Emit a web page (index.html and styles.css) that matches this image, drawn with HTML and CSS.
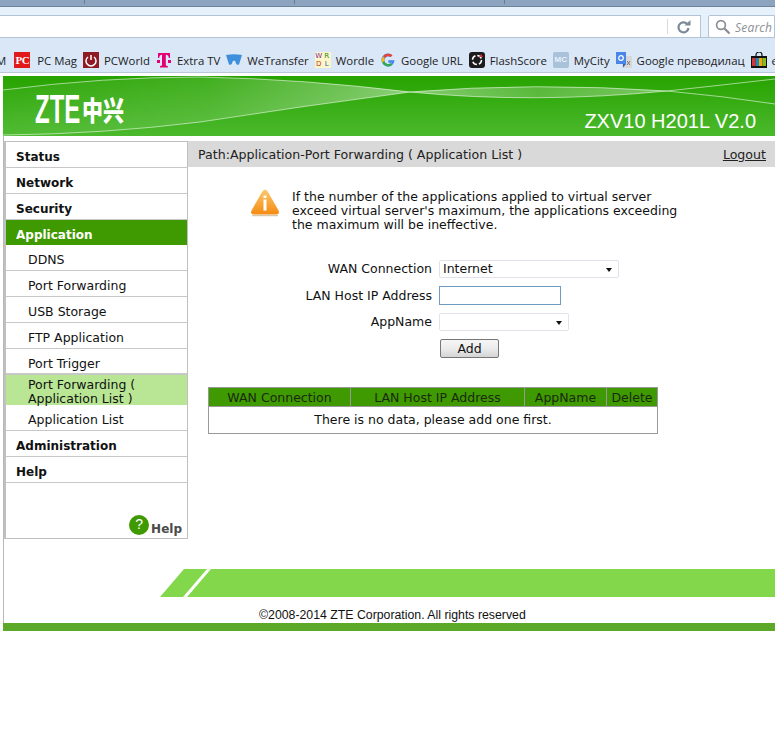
FILE: index.html
```html
<!DOCTYPE html>
<html lang="en">
<head>
<meta charset="utf-8">
<title>ZXV10 H201L V2.0</title>
<link rel="stylesheet" href="styles.css">
</head>
<body>
<div class="chrome">
  <div class="tabs">
    <span class="tab-sep s1"></span><span class="tab-sep s2"></span><span class="tab-sep s3"></span>
  </div>
  <div class="toolbar">
    <div class="urlbar">
      <span class="reload">
        <svg width="16" height="14" viewBox="0 0 16 14"><path d="M12.5 8a5 5 0 1 1-1.6-4.4" fill="none" stroke="#7d8a96" stroke-width="2.2"/><path d="M8.5 5.500h6V0z" fill="#7d8a96"/></svg>
      </span>
    </div>
    <div class="searchbar">
      <svg width="16" height="16" viewBox="0 0 16 16"><circle cx="6" cy="6" r="4.4" fill="none" stroke="#8a8f96" stroke-width="1.7"/><path d="M9.5 9.5l5 5" stroke="#8a8f96" stroke-width="2.2"/></svg>
      <span class="search-text">Search</span>
    </div>
  </div>
  <div class="bookmarks">
    <span class="bm bm-first">M</span>
    <span class="bm"><span class="fav fav-pc">PC</span>PC Mag</span>
    <span class="bm"><svg class="fav" viewBox="0 0 16 16"><rect width="16" height="16" fill="#8f1a24"/><path d="M5 5a5 5 0 1 0 6 0" fill="none" stroke="#fff" stroke-width="1.5"/><path d="M8 3v5" stroke="#fff" stroke-width="1.5"/></svg>PCWorld</span>
    <span class="bm"><svg class="fav" viewBox="0 0 16 16"><path d="M2 1h12v5h-1.200q0-3-3-3.200V13q0 1 2 1v1.500H4V14q2 0 2-1V2.800Q3.200 3 3.200 6H2z" fill="#e20074"/><rect x="1" y="8" width="3" height="3" fill="#e20074"/><rect x="12" y="8" width="3" height="3" fill="#e20074"/></svg>Extra TV</span>
    <span class="bm"><svg class="fav" viewBox="0 0 16 16"><path d="M0 3q8-1.500 16 0l-3 9.500q-2 1-3-1-.5-3-2-3-1.500 0-2 3-1 2-3 1z" fill="#3f8fdc"/></svg>WeTransfer</span>
    <span class="bm"><span class="fav fav-wr"><i class="w1">W</i><i class="w2">R</i><i class="w3">D</i><i class="w4">L</i></span>Wordle</span>
    <span class="bm"><svg class="fav" viewBox="0 0 16 16"><path d="M14.500 8.200H8.300v2.500h3.600A4 4 0 1 1 10.600 5l1.800-1.800A6.500 6.500 0 1 0 14.500 8.200z" fill="#4285f4"/><path d="M3 4.500A6.500 6.500 0 0 1 12.400 3.200L10.600 5A4 4 0 0 0 4.800 6z" fill="#ea4335"/><path d="M2.300 10.800A6.500 6.500 0 0 1 3 4.500L4.800 6a4 4 0 0 0-.500 3z" fill="#fbbc05"/><path d="M2.300 10.800L4.300 9a4 4 0 0 0 6.500 2l1.800 1.700a6.500 6.500 0 0 1-10.300-1.900z" fill="#34a853"/></svg>Google URL</span>
    <span class="bm"><svg class="fav" viewBox="0 0 16 16"><rect width="16" height="16" rx="3" fill="#1c1c1c"/><circle cx="8" cy="8" r="4.500" fill="none" stroke="#fff" stroke-width="1.500" stroke-dasharray="5 2"/><path d="M10 5l2-3 2 3z" fill="#e0303a"/></svg>FlashScore</span>
    <span class="bm"><span class="fav fav-mc">MC</span>MyCity</span>
    <span class="bm"><svg class="fav" viewBox="0 0 16 16"><rect x="6" y="4" width="10" height="12" fill="#d8d8d8"/><rect width="10" height="12" fill="#4a86e8"/><path d="M10 12l-3 3.500V12z" fill="#2f5fb5"/><circle cx="5" cy="6" r="2.300" fill="none" stroke="#fff" stroke-width="1.200"/><path d="M11 9l3 4M14 9l-3 4" stroke="#777" stroke-width="1"/></svg>Google преводилац</span>
    <span class="bm"><svg class="fav" viewBox="0 0 16 16"><path d="M5 5V3a3 3 0 0 1 6 0v2" fill="none" stroke="#111" stroke-width="1.200"/><rect y="4" width="16" height="12" fill="#111"/><rect x="1" y="6" width="3.500" height="8" fill="#d33"/><rect x="4.500" y="6" width="3.500" height="8" fill="#28b"/><rect x="8" y="6" width="3.500" height="8" fill="#ea1"/><rect x="11.500" y="6" width="3.500" height="8" fill="#8b2"/></svg>e</span>
  </div>
</div>

<div class="page">
  <header class="banner">
    <svg class="swoosh" viewBox="0 0 772 60" preserveAspectRatio="none">
      <defs>
        <linearGradient id="ribbonL" x1="0" y1="0" x2="1" y2="0">
          <stop offset="0" stop-color="#fff" stop-opacity=".03"/>
          <stop offset=".5" stop-color="#fff" stop-opacity=".12"/>
          <stop offset=".85" stop-color="#fff" stop-opacity=".32"/>
          <stop offset="1" stop-color="#fff" stop-opacity=".45"/>
        </linearGradient>
        <linearGradient id="ribbonR" x1="0" y1="0" x2="1" y2="0">
          <stop offset="0" stop-color="#fff" stop-opacity=".4"/>
          <stop offset=".5" stop-color="#fff" stop-opacity=".2"/>
          <stop offset="1" stop-color="#fff" stop-opacity=".35"/>
        </linearGradient>
      </defs>
      <path d="M0 14Q100 1 197 1Q300 3 407 16Q300 30 197 46Q100 58 0 59Z" fill="url(#ribbonL)"/>
      <path d="M407 16Q530 6 664 15Q530 28 407 16Z" fill="url(#ribbonR)"/>
      <path d="M0 14Q100 1 197 1Q300 3 407 16Q530 28 664 15Q720 9 772 3" fill="none" stroke="#fff" stroke-opacity=".55" stroke-width="1"/>
      <path d="M0 59Q100 58 197 46Q300 30 407 16Q530 6 664 15Q720 20 772 28" fill="none" stroke="#fff" stroke-opacity=".55" stroke-width="1"/>
    </svg>
    <div class="logo"><span class="logo-latin">ZTE</span><span class="logo-cjk">中兴</span></div>
    <div class="model">ZXV10 H201L V2.0</div>
  </header>

  <div class="layout">
    <nav class="sidebar">
      <a class="nav-top">Status</a>
      <a class="nav-top">Network</a>
      <a class="nav-top">Security</a>
      <a class="nav-top nav-active">Application</a>
      <a class="nav-sub">DDNS</a>
      <a class="nav-sub">Port Forwarding</a>
      <a class="nav-sub">USB Storage</a>
      <a class="nav-sub">FTP Application</a>
      <a class="nav-sub nav-sub-last">Port Trigger</a>
      <a class="nav-sub nav-current">Port Forwarding ( Application List )</a>
      <a class="nav-sub">Application List</a>
      <a class="nav-top">Administration</a>
      <a class="nav-top">Help</a>
      <div class="help-link">
        <span class="help-icon">?</span><span class="help-text">Help</span>
      </div>
    </nav>

    <main class="content">
      <div class="pathbar">
        <span>Path:Application-Port Forwarding ( Application List )</span>
        <a class="logout">Logout</a>
      </div>
      <div class="notice">
        <svg class="warn" width="30" height="30" viewBox="0 0 30 30">
          <defs><linearGradient id="wg" x1="0" y1="0" x2="0" y2="1"><stop offset="0" stop-color="#fbc96b"/><stop offset="1" stop-color="#f58a12"/></linearGradient></defs>
          <path d="M15 1.500Q16.500 1.500 18 4L28.500 22.500Q30 26 26.500 26.500H3.500Q0 26 1.500 22.500L12 4Q13.500 1.500 15 1.500Z" fill="url(#wg)"/>
          <path d="M2 27.500H28" stroke="#d9c7a8" stroke-width="1.500"/>
          <rect x="13.500" y="11.500" width="3" height="11" fill="#fff"/>
          <rect x="13.500" y="7.500" width="3" height="2.500" fill="#fff"/>
        </svg>
        <p class="notice-text">If the number of the applications applied to virtual server exceed virtual server's maximum, the applications exceeding the maximum will be ineffective.</p>
      </div>
      <form class="form">
        <label class="label">WAN Connection</label>
        <div class="fake-select select-wide"><span>Internet</span><i class="caret"></i></div>
        <label class="label">LAN Host IP Address</label>
        <input class="text-input" type="text">
        <label class="label">AppName</label>
        <div class="fake-select select-narrow"><span></span><i class="caret"></i></div>
        <span></span>
        <button class="add-btn" type="button">Add</button>
      </form>
      <table class="data">
        <thead>
          <tr><th class="c1">WAN Connection</th><th class="c2">LAN Host IP Address</th><th class="c3">AppName</th><th class="c4">Delete</th></tr>
        </thead>
        <tbody>
          <tr><td colspan="4">There is no data, please add one first.</td></tr>
        </tbody>
      </table>
    </main>
  </div>

  <div class="lower">
    <div class="band-wrap">
      <svg class="band-cut" width="66" height="28" viewBox="0 0 66 28"><path d="M0 28L24 0H66V28H27L51 0H47L23 28Z" fill="#82d84a"/></svg>
      <div class="band"></div>
    </div>
    <div class="copyright">©2008-2014 ZTE Corporation. All rights reserved</div>
  </div>
  <div class="bottom-bar"></div>
</div>
</body>
</html>
```
FILE: styles.css
```css
* { box-sizing: border-box; }
html, body { margin: 0; padding: 0; height: 743px; overflow: hidden; background: #fff; }
body { font-family: "DejaVu Sans", Verdana, sans-serif; font-size: 12.500px; color: #111; }

.chrome { height: 74px; overflow: hidden; }
.tabs { height: 7px; background: #8ca4c0; border-bottom: 1px solid #6f8499; position: relative; }
.tab-sep { position: absolute; top: 0; width: 1px; height: 4px; background: #6b7d90; }
.s1 { left: 84px; } .s2 { left: 294px; } .s3 { left: 504px; }
.toolbar { height: 31px; background: #e7f1fb; display: flex; gap: 7px; padding: 8px 0 0; border-bottom: 1px solid #b3c4d6; align-items: flex-start; }
.urlbar { width: 701px; height: 23px; background: #fff; border: 1px solid #b3c4d6; border-left: 0; display: flex; justify-content: flex-end; }
.reload { width: 33px; height: 15px; margin-top: 3px; border-left: 1px solid #d5dbe0; display: flex; justify-content: center; align-items: center; }
.searchbar { flex: 1; height: 23px; background: #fff; border: 1px solid #b3c4d6; border-radius: 2px 0 0 2px; padding: 3px 0 0 6px; display: flex; gap: 4px; white-space: nowrap; overflow: hidden; }
.search-text { font: italic 12px "Open Sans", sans-serif; color: #8b8f94; letter-spacing: .2px; }
.bookmarks { height: 35px; padding-top: 10px; background: #d9e7f7; border-bottom: 1px solid #b8c8da; display: flex; align-items: center; font: 11.400px "Open Sans", sans-serif; color: #222; white-space: nowrap; overflow: hidden; gap: 6px; }
.bm { display: inline-flex; align-items: center; gap: 5px; }
.bm-first { margin-left: -4px; margin-right: 2px; }
.fav { width: 16px; height: 16px; flex: none; display: inline-block; }
.fav-pc { background: #e01a1a; color: #fff; font: bold 11px/16px "Liberation Serif", serif; text-align: center; letter-spacing: -.5px; margin-right: 2px; }
.fav-wr { background: #fdf6c8; display: inline-grid; grid-template-columns: 1fr 1fr; font: 7px/8px "DejaVu Sans", sans-serif; text-align: center; }
.fav-wr i { font-style: normal; }
.w1 { color: #7a1fa2; } .w2 { color: #2a8a2a; } .w3 { color: #c0392b; } .w4 { color: #1565c0; }
.fav-mc { background: #a9c2da; color: #e8f1f9; font: bold 8px/16px "Liberation Sans", sans-serif; text-align: center; border-radius: 2px; }

.page { padding-left: 3px; }
.banner { height: 60px; margin-top: 2px; background: linear-gradient(#27a300, #4bb92d); position: relative; overflow: hidden; }
.swoosh { position: absolute; inset: 0; width: 100%; height: 100%; }
.logo { position: absolute; left: 32px; top: 18px; color: #fff; display: flex; align-items: center; height: 30px; }
.logo-latin { font: bold 40px/30px "Liberation Sans", sans-serif; display: inline-block; transform: scaleX(.6); transform-origin: left center; width: 47px; }
.logo-cjk { font: 900 21px/30px "Noto Sans CJK SC", sans-serif; display: inline-block; transform: scaleY(1.3); }
.model { position: absolute; right: 19px; top: 33px; font: 20px/24px "Liberation Sans", sans-serif; color: #fff; }

.lower, .layout { border-left: 1px solid #b8b8b8; }
.layout { display: flex; padding-top: 5px; height: 406px; }
.sidebar { width: 184px; height: 398px; border: 1px solid #c0c0c0; border-left-width: 2px; background: #fff; display: flex; flex-direction: column; position: relative; flex: none; }
.nav-top { display: block; height: 26px; line-height: 31px; padding-left: 10px; font-weight: bold; font-size: 12px; border-bottom: 1px solid #c8c8c8; color: #111; }
.nav-active { height: 25px; background: #3f9900; color: #fff; border-bottom: 0; }
.nav-sub { display: block; height: 26px; line-height: 30px; padding-left: 22px; border-bottom: 1px solid #c8c8c8; }
.nav-sub-last { border-bottom: 2px solid #c8c8c8; }
.nav-current { height: 30px; line-height: 14px; padding: 3px 30px 0 22px; background: #b8e694; border-bottom: 0; }
.help-link { position: absolute; right: 5px; bottom: 2px; display: flex; align-items: flex-end; }
.help-icon { width: 20px; height: 20px; border-radius: 50%; background: #3f9900; color: #fff; font: 14px/19px "Liberation Sans", sans-serif; text-align: center; margin-bottom: 1px; margin-right: 2px; }
.help-text { font-weight: bold; font-size: 12px; line-height: 14px; color: #4a4a4a; }

.content { flex: 1; min-width: 0; }
.pathbar { height: 26px; background: #d9d9d9; display: flex; justify-content: space-between; align-items: center; padding: 0 9px 0 10px; color: #222; font-size: 12.600px; }
.logout { text-decoration: underline; }
.notice { display: flex; margin: 21px 0 0 62px; gap: 12px; height: 50px; align-items: flex-start; }
.warn { flex: none; }
.notice-text { margin: 2px 0 0; width: 395px; line-height: 14px; }
.form { display: grid; grid-template-columns: 244px auto; column-gap: 7px; row-gap: 8px; margin-top: 22px; justify-items: start; align-items: center; }
.label { justify-self: end; line-height: 18px; }
.fake-select { height: 18px; border: 1px solid #e2e3ea; background: #fff; position: relative; padding-left: 3px; line-height: 16px; border-radius: 2px; }
.select-wide { width: 180px; }
.select-narrow { width: 130px; }
.caret { position: absolute; right: 6px; top: 7px; width: 0; height: 0; border: 3.500px solid transparent; border-top: 4px solid #111; border-bottom: 0; }
.text-input { width: 122px; height: 19px; border: 1px solid #6f9bc0; padding: 0; outline: 0; background: #fff; }
.add-btn { margin-left: 1px; width: 59px; height: 19px; padding: 0; border: 1px solid #777; border-radius: 2px; background: linear-gradient(#f5f5f5 0%, #ececec 50%, #d4d4d4 100%); font: 12.500px/16px "DejaVu Sans", sans-serif; color: #111; }
.data { border-collapse: collapse; margin: 29px 0 0 20px; width: 450px; table-layout: fixed; }
.data th, .data td { border: 1px solid #999; padding: 0; text-align: center; font-weight: normal; }
.data th { background: #3f9900; height: 19px; line-height: 17px; color: #1a2a10; }
.data td { height: 27px; line-height: 26px; background: #fff; }
.c1 { width: 142px; } .c2 { width: 174px; } .c3 { width: 82px; } .c4 { width: 51px; }

.band-wrap { display: flex; height: 28px; margin-left: 156px; }
.lower { padding-top: 27px; }
.band-cut { flex: none; }
.band { flex: 1; background: #82d84a; }
.copyright { font: 12.300px/14px "Liberation Sans", sans-serif; color: #111; height: 26px; padding: 11px 0 0 255px; }
.bottom-bar { height: 8px; background: #5ca828; }
```
